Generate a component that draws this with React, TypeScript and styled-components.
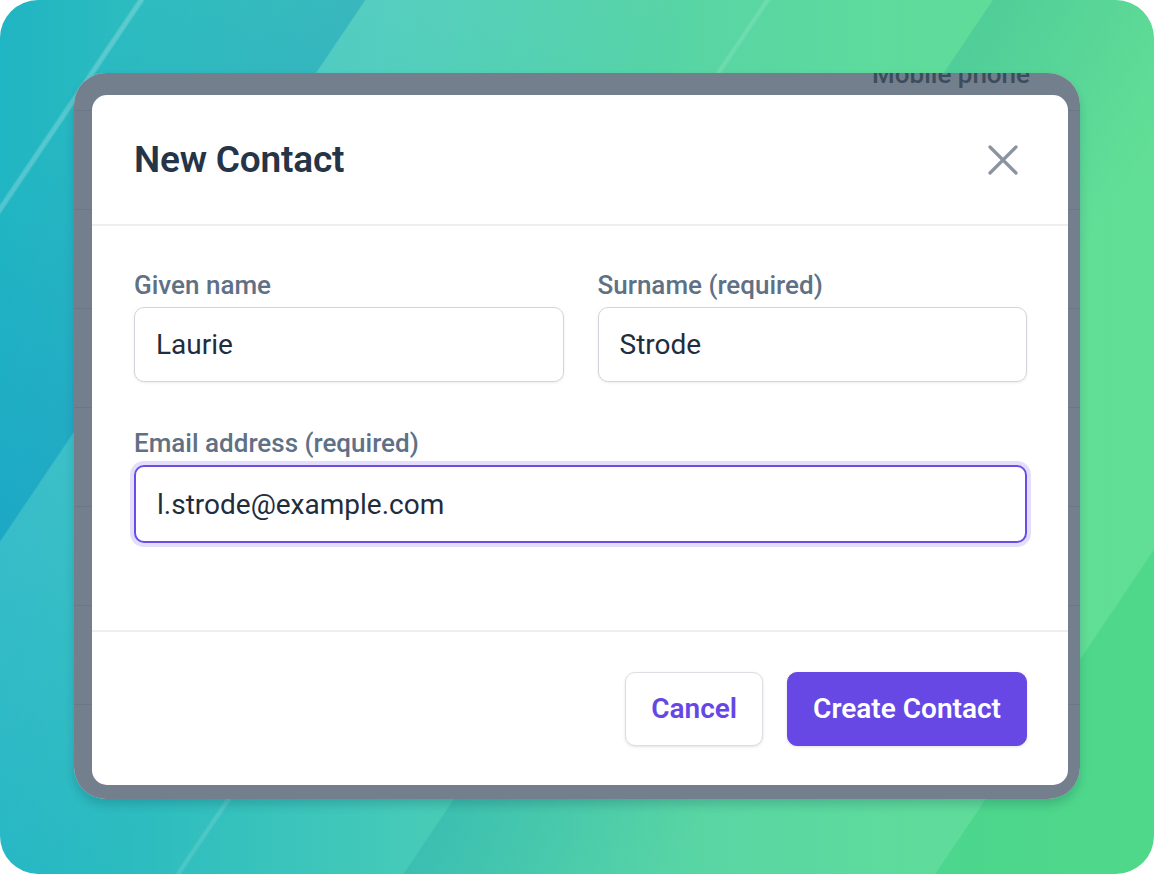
import styled, { createGlobalStyle } from 'styled-components';

const GlobalStyle = createGlobalStyle`
  html, body {
    margin: 0;
    padding: 0;
    background: #ffffff;
  }
  body {
    font-family: Roboto, "Noto Sans", "Liberation Sans", sans-serif;
    -webkit-font-smoothing: antialiased;
  }
  * {
    box-sizing: border-box;
  }
`;

const Scene = styled.div`
  width: 1154px;
  height: 874px;
  border-radius: 38px;
  overflow: hidden;
  display: flex;
  padding: 73px 74px 75px 74px;
  background:
    linear-gradient(
      124deg,
      transparent 7.85%,
      rgba(255, 255, 255, 0.22) 8%,
      rgba(255, 255, 255, 0.22) 8.2%,
      transparent 8.35%,
      transparent 43.8%,
      rgba(255, 255, 255, 0.12) 43.95%,
      rgba(255, 255, 255, 0.12) 44.1%,
      transparent 44.25%
    ),
    linear-gradient(
      124deg,
      rgba(10, 100, 210, 0) 8%,
      rgba(10, 100, 210, 0.16) 20.9%,
      rgba(255, 255, 255, 0.1) 21%,
      rgba(255, 255, 255, 0) 40%,
      rgba(0, 130, 150, 0) 56.9%,
      rgba(0, 130, 150, 0.16) 57%,
      rgba(0, 130, 150, 0) 72%,
      rgba(0, 190, 90, 0) 87.4%,
      rgba(0, 190, 90, 0.2) 87.5%,
      rgba(0, 190, 90, 0.2) 100%
    ),
    linear-gradient(90deg, #20b5c3 0%, #45cab8 35%, #58d5a4 60%, #5edb9c 78%, #62df95 100%);
`;

const AppWindow = styled.div`
  position: relative;
  flex: 1;
  border-radius: 32px;
  overflow: hidden;
  background: #ffffff;
  box-shadow: 0 6px 10px rgba(0, 40, 60, 0.18);
`;

const ContactsTable = styled.div`
  display: flex;
  flex-direction: column;
`;

const TableHead = styled.div`
  height: 38px;
  display: flex;
  justify-content: flex-end;
  padding-right: 50px;
  border-bottom: 1px solid #dfe3e8;
`;

const HeadCell = styled.span`
  margin-top: -12px;
  font-size: 26px;
  line-height: 26px;
  font-weight: 500;
  color: #4b5563;
`;

const TableRow = styled.div`
  height: 99px;
  border-bottom: 1px solid #dfe3e8;
`;

const Backdrop = styled.div`
  position: absolute;
  inset: 0;
  display: flex;
  padding: 22px 12px 14px 18px;
  background: rgba(55, 72, 91, 0.7);
`;

const Dialog = styled.div`
  flex: 1;
  display: flex;
  flex-direction: column;
  background: #ffffff;
  border-radius: 15px;
  overflow: hidden;
`;

const DialogHeader = styled.div`
  height: 131px;
  display: flex;
  align-items: center;
  justify-content: space-between;
  padding: 0 43px 0 42px;
  border-bottom: 2px solid #eceef1;
`;

const Title = styled.h2`
  margin: 0;
  font-size: 37px;
  font-weight: 600;
  color: #253447;
  letter-spacing: -0.2px;
`;

const CloseButton = styled.button`
  width: 44px;
  height: 44px;
  padding: 0;
  border: none;
  background: transparent;
  display: flex;
  align-items: center;
  justify-content: center;
  color: #8a939f;
  cursor: pointer;
`;

const DialogBody = styled.div`
  flex: 1;
  display: grid;
  grid-template-columns: 1fr 1fr;
  align-content: start;
  column-gap: 34px;
  row-gap: 46px;
  padding: 44px 41px 0 42px;
`;

const Field = styled.label<{ $wide?: boolean }>`
  display: flex;
  flex-direction: column;
  gap: 7px;
  grid-column: ${(p) => (p.$wide ? '1 / -1' : 'auto')};
`;

const FieldLabel = styled.span`
  font-size: 26px;
  line-height: 30px;
  font-weight: 500;
  color: #607085;
`;

const TextInput = styled.input<{ $focused?: boolean }>`
  height: ${(p) => (p.$focused ? '78px' : '75px')};
  width: 100%;
  padding: 0 21px;
  font-family: inherit;
  font-size: 28px;
  color: #1f2d3d;
  background: #ffffff;
  border-radius: 10px;
  outline: none;
  border: ${(p) => (p.$focused ? '2px solid #6b4de6' : '1.5px solid #d2d6dc')};
  box-shadow: ${(p) =>
    p.$focused ? '0 0 0 4px #e3defc' : '0 1px 3px rgba(15, 23, 42, 0.08)'};
`;

const DialogFooter = styled.div`
  height: 155px;
  display: flex;
  align-items: center;
  justify-content: flex-end;
  gap: 24px;
  padding: 0 41px;
  border-top: 2px solid #eceef1;
`;

const Button = styled.button<{ $primary?: boolean }>`
  height: 74px;
  padding: 0 25px;
  border-radius: 10px;
  font-family: inherit;
  font-size: 28px;
  font-weight: 600;
  cursor: pointer;
  color: ${(p) => (p.$primary ? '#ffffff' : '#6547e6')};
  background: ${(p) => (p.$primary ? '#6848e5' : '#ffffff')};
  border: ${(p) => (p.$primary ? '1.5px solid #6848e5' : '1.5px solid #dcdee3')};
  box-shadow: 0 1px 3px rgba(15, 23, 42, 0.12);
`;

function CloseIcon() {
  return (
    <svg width="30" height="30" viewBox="0 0 30 30" fill="none">
      <path
        d="M2 2L28 28M28 2L2 28"
        stroke="currentColor"
        strokeWidth="3.2"
        strokeLinecap="round"
      />
    </svg>
  );
}

export default function App() {
  return (
    <>
      <GlobalStyle />
      <Scene>
        <AppWindow>
          <ContactsTable>
            <TableHead>
              <HeadCell>Mobile phone</HeadCell>
            </TableHead>
            {Array.from({ length: 7 }).map((_, i) => (
              <TableRow key={i} />
            ))}
          </ContactsTable>
          <Backdrop>
            <Dialog>
              <DialogHeader>
                <Title>New Contact</Title>
                <CloseButton aria-label="Close">
                  <CloseIcon />
                </CloseButton>
              </DialogHeader>
              <DialogBody>
                <Field>
                  <FieldLabel>Given name</FieldLabel>
                  <TextInput defaultValue="Laurie" />
                </Field>
                <Field>
                  <FieldLabel>Surname (required)</FieldLabel>
                  <TextInput defaultValue="Strode" />
                </Field>
                <Field $wide>
                  <FieldLabel>Email address (required)</FieldLabel>
                  <TextInput $focused defaultValue="l.strode@example.com" />
                </Field>
              </DialogBody>
              <DialogFooter>
                <Button>Cancel</Button>
                <Button $primary>Create Contact</Button>
              </DialogFooter>
            </Dialog>
          </Backdrop>
        </AppWindow>
      </Scene>
    </>
  );
}
